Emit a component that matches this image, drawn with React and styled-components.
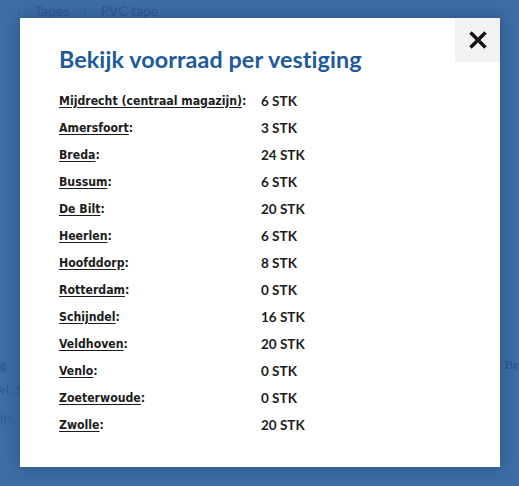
import React from 'react';
import styled, { createGlobalStyle } from 'styled-components';

const GlobalStyle = createGlobalStyle`
    html, body {
        margin: 0;
        padding: 0;
    }
    body {
        font-family: "Liberation Sans", Arial, sans-serif;
        background: #3d6da5;
    }
`;

const Page = styled.div`
    position: relative;
    width: 519px;
    height: 486px;
    overflow: hidden;
    background: #3d6da5;
`;

const Behind = styled.div`
    filter: blur(0.6px);
    color: #2c5994;
    font-family: "Lato", sans-serif;
    font-size: 14px;
`;

const Crumbs = styled.div`
    display: flex;
    gap: 14px;
    padding: 0 0 0 17px;
    height: 20px;
    align-items: center;

    & > .sep {
        font-size: 12px;
    }
`;

const BehindRow = styled.div`
    display: flex;
    justify-content: space-between;
    padding: 0 0 0 ${p => p.$left}px;
    margin-top: ${p => p.$top}px;
    font-family: "Liberation Serif", serif;
    font-weight: ${p => (p.$bold ? 700 : 400)};
    font-size: 13px;
`;

const Modal = styled.div`
    position: absolute;
    left: 20px;
    top: 18px;
    width: 480px;
    height: 449px;
    box-sizing: border-box;
    background: #fff;
    padding: 27px 39px 0 39px;
    box-shadow: 0 0 14px rgba(20, 45, 80, 0.45);
`;

const Close = styled.button`
    position: absolute;
    right: 0;
    top: 0;
    width: 45px;
    height: 44px;
    border: none;
    padding: 0;
    background: #f2f2f2;
    display: flex;
    align-items: center;
    justify-content: center;
    cursor: pointer;
`;

const Title = styled.h2`
    margin: 0 0 14px 0;
    font-family: "Lato", sans-serif;
    font-weight: 700;
    font-size: 23.3px;
    color: #1d5a9b;
    letter-spacing: 0.1px;
`;

const List = styled.div`
    display: flex;
    flex-direction: column;
`;

const Row = styled.div`
    display: grid;
    grid-template-columns: 202px 1fr;
    height: 27px;
    align-items: center;
`;

const Place = styled.span`
    font-family: "DejaVu Sans Condensed", "DejaVu Sans", sans-serif;
    font-weight: 700;
    font-size: 12.2px;
    color: #1c1c1c;

    & > a {
        color: inherit;
        text-decoration: underline;
        text-underline-offset: 2px;
    }
`;

const Stock = styled.span`
    font-family: "Lato", sans-serif;
    font-weight: 700;
    font-size: 13.5px;
    color: #1c1c1c;
`;

const stock = [
    ['Mijdrecht (centraal magazijn)', 6],
    ['Amersfoort', 3],
    ['Breda', 24],
    ['Bussum', 6],
    ['De Bilt', 20],
    ['Heerlen', 6],
    ['Hoofddorp', 8],
    ['Rotterdam', 0],
    ['Schijndel', 16],
    ['Veldhoven', 20],
    ['Venlo', 0],
    ['Zoeterwoude', 0],
    ['Zwolle', 20],
];

const App = () => {
    return (
        <Page>
            <GlobalStyle />
            <Behind>
                <Crumbs>
                    <span className="sep">›</span>
                    <span>Tapes</span>
                    <span className="sep">›</span>
                    <span>PVC tape</span>
                </Crumbs>
                <BehindRow $top={337} $left={0} $bold>
                    <span>g</span>
                    <span>Br</span>
                </BehindRow>
                <BehindRow $top={9} $left={0}>
                    <span>el, S</span>
                </BehindRow>
                <BehindRow $top={12} $left={0}>
                    <span>ijs, S</span>
                </BehindRow>
            </Behind>
            <Modal>
                <Close aria-label="Sluiten">
                    <svg width="20" height="20" viewBox="0 0 20 20">
                        <path d="M2.5 2.5 L17.5 17.5 M17.5 2.5 L2.5 17.5" stroke="#111" strokeWidth="3.4" strokeLinecap="butt" />
                    </svg>
                </Close>
                <Title>Bekijk voorraad per vestiging</Title>
                <List>
                    {stock.map(([name, n]) => (
                        <Row key={name}>
                            <Place><a href="#">{name}</a>:</Place>
                            <Stock>{n} STK</Stock>
                        </Row>
                    ))}
                </List>
            </Modal>
        </Page>
    );
};

export default App;
